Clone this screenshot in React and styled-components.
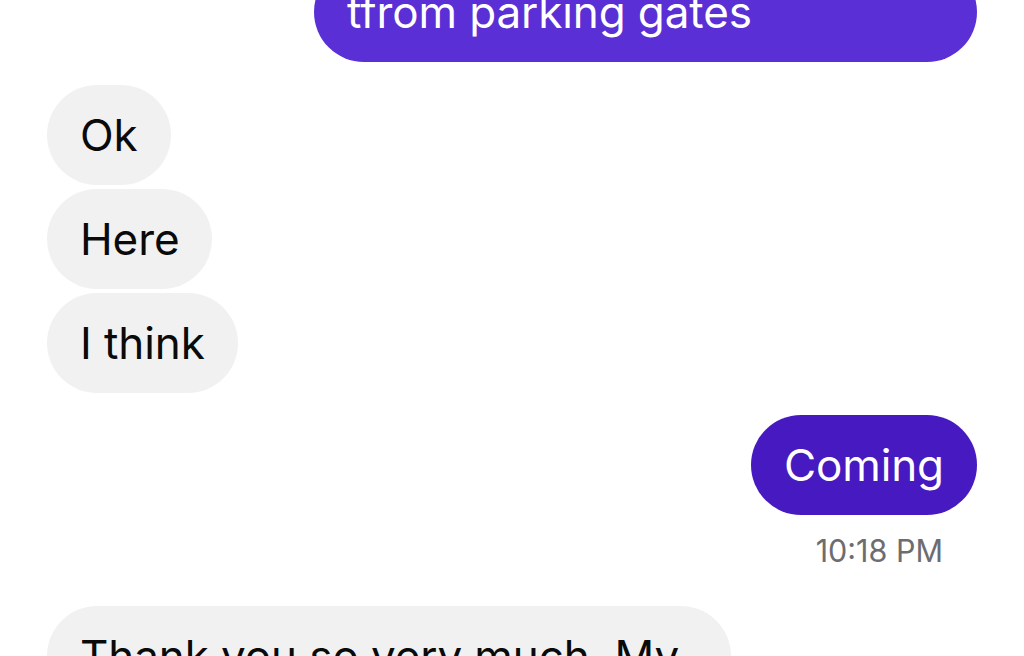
import styled, { createGlobalStyle } from "styled-components";

const GlobalStyle = createGlobalStyle`
  html, body {
    margin: 0;
    padding: 0;
    background: #ffffff;
    overflow: hidden;
  }
  body {
    font-family: Inter, "Noto Sans", "Liberation Sans", sans-serif;
    -webkit-font-smoothing: antialiased;
  }
`;

const Screen = styled.div`
  width: 1024px;
  height: 656px;
  overflow: hidden;
  background: #ffffff;
`;

const Thread = styled.div`
  display: flex;
  flex-direction: column;
  padding: 0 47px;
  margin-top: -38px;
`;

const Group = styled.div`
  display: flex;
  flex-direction: column;
  align-items: ${(p) => (p.$out ? "flex-end" : "flex-start")};
  gap: 4px;
  margin-top: ${(p) => p.$space || 0}px;
`;

const Bubble = styled.div`
  box-sizing: border-box;
  height: 100px;
  padding: 0 33px;
  border-radius: 50px;
  display: flex;
  align-items: center;
  font-size: 44px;
  letter-spacing: -0.1px;
  white-space: nowrap;
  background: ${(p) => p.$bg || "#f1f1f1"};
  color: ${(p) => (p.$bg ? "#ffffff" : "#0a0a0a")};
  width: ${(p) => (p.$width ? `${p.$width}px` : "auto")};
`;

const Stamp = styled.div`
  align-self: flex-end;
  margin: 14px 34px 0 0;
  font-size: 30.5px;
  line-height: 36px;
  color: #6c6c71;
`;

export default function App() {
  return (
    <Screen>
      <GlobalStyle />
      <Thread>
        <Group $out>
          <Bubble $bg="#5a2fd5" $width={663}>tfrom parking gates</Bubble>
        </Group>
        <Group $space={23}>
          <Bubble>Ok</Bubble>
          <Bubble>Here</Bubble>
          <Bubble>I think</Bubble>
        </Group>
        <Group $out $space={22}>
          <Bubble $bg="#4719c0">Coming</Bubble>
          <Stamp>10:18 PM</Stamp>
        </Group>
        <Group $space={37}>
          <Bubble $width={684}>Thank you so very much. My</Bubble>
        </Group>
      </Thread>
    </Screen>
  );
}
